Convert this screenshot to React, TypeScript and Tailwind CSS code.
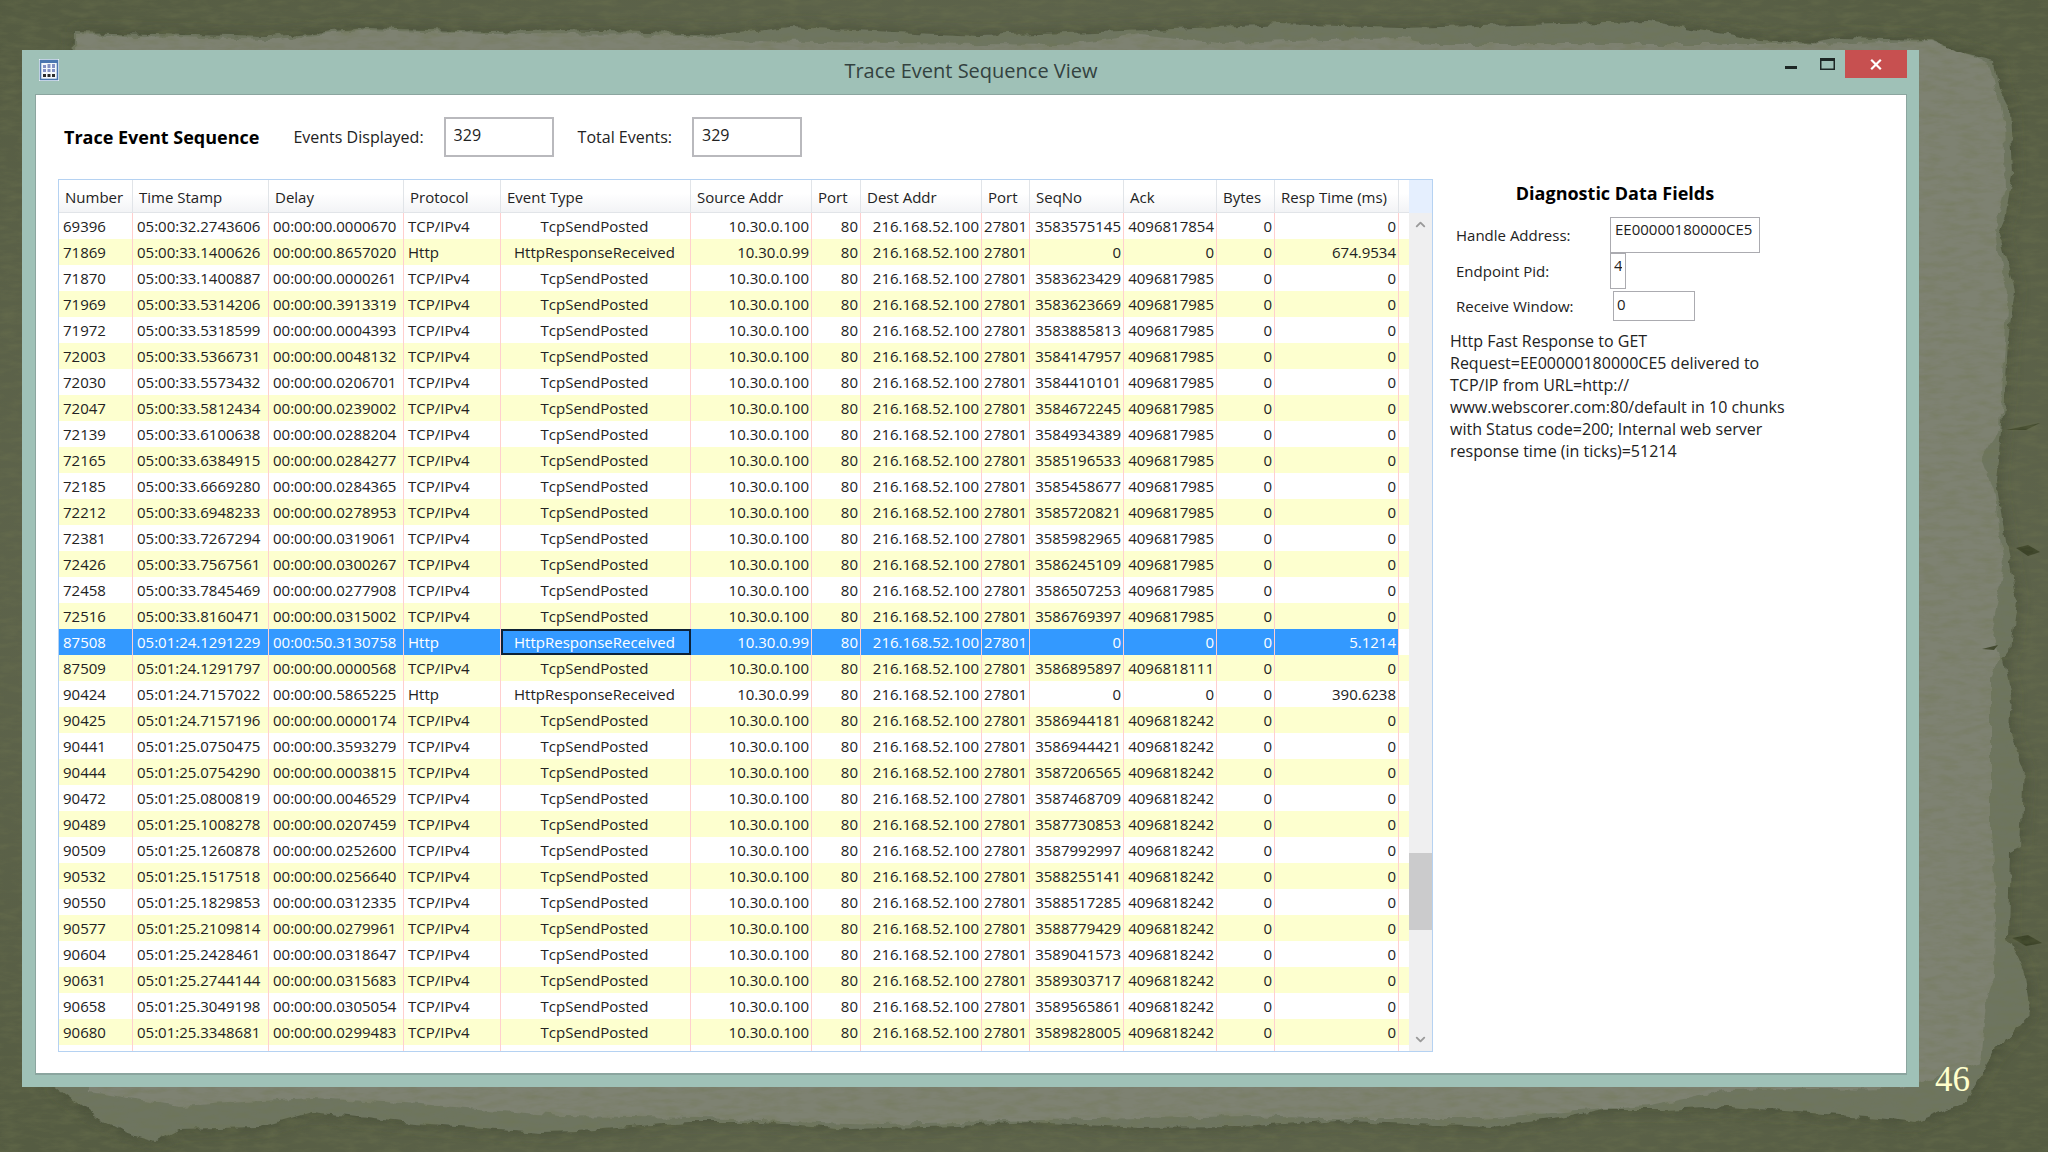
import clsx from "clsx";
import { ChevronDown, ChevronUp } from "lucide-react";

type Event = {
  number: number;
  time: string;
  delay: string;
  seqNo: string;
  ack: string;
  respTime?: string;
};

const tcp = (
  number: number,
  time: string,
  delay: string,
  seqNo: string,
  ack: string
): Event => ({ number, time, delay, seqNo, ack });

const http = (
  number: number,
  time: string,
  delay: string,
  respTime: string
): Event => ({ number, time, delay, seqNo: "0", ack: "0", respTime });

const SELECTED = 87508;

const events: Event[] = [
  tcp(69396, "05:00:32.2743606", "00:00:00.0000670", "3583575145", "4096817854"),
  http(71869, "05:00:33.1400626", "00:00:00.8657020", "674.9534"),
  tcp(71870, "05:00:33.1400887", "00:00:00.0000261", "3583623429", "4096817985"),
  tcp(71969, "05:00:33.5314206", "00:00:00.3913319", "3583623669", "4096817985"),
  tcp(71972, "05:00:33.5318599", "00:00:00.0004393", "3583885813", "4096817985"),
  tcp(72003, "05:00:33.5366731", "00:00:00.0048132", "3584147957", "4096817985"),
  tcp(72030, "05:00:33.5573432", "00:00:00.0206701", "3584410101", "4096817985"),
  tcp(72047, "05:00:33.5812434", "00:00:00.0239002", "3584672245", "4096817985"),
  tcp(72139, "05:00:33.6100638", "00:00:00.0288204", "3584934389", "4096817985"),
  tcp(72165, "05:00:33.6384915", "00:00:00.0284277", "3585196533", "4096817985"),
  tcp(72185, "05:00:33.6669280", "00:00:00.0284365", "3585458677", "4096817985"),
  tcp(72212, "05:00:33.6948233", "00:00:00.0278953", "3585720821", "4096817985"),
  tcp(72381, "05:00:33.7267294", "00:00:00.0319061", "3585982965", "4096817985"),
  tcp(72426, "05:00:33.7567561", "00:00:00.0300267", "3586245109", "4096817985"),
  tcp(72458, "05:00:33.7845469", "00:00:00.0277908", "3586507253", "4096817985"),
  tcp(72516, "05:00:33.8160471", "00:00:00.0315002", "3586769397", "4096817985"),
  http(87508, "05:01:24.1291229", "00:00:50.3130758", "5.1214"),
  tcp(87509, "05:01:24.1291797", "00:00:00.0000568", "3586895897", "4096818111"),
  http(90424, "05:01:24.7157022", "00:00:00.5865225", "390.6238"),
  tcp(90425, "05:01:24.7157196", "00:00:00.0000174", "3586944181", "4096818242"),
  tcp(90441, "05:01:25.0750475", "00:00:00.3593279", "3586944421", "4096818242"),
  tcp(90444, "05:01:25.0754290", "00:00:00.0003815", "3587206565", "4096818242"),
  tcp(90472, "05:01:25.0800819", "00:00:00.0046529", "3587468709", "4096818242"),
  tcp(90489, "05:01:25.1008278", "00:00:00.0207459", "3587730853", "4096818242"),
  tcp(90509, "05:01:25.1260878", "00:00:00.0252600", "3587992997", "4096818242"),
  tcp(90532, "05:01:25.1517518", "00:00:00.0256640", "3588255141", "4096818242"),
  tcp(90550, "05:01:25.1829853", "00:00:00.0312335", "3588517285", "4096818242"),
  tcp(90577, "05:01:25.2109814", "00:00:00.0279961", "3588779429", "4096818242"),
  tcp(90604, "05:01:25.2428461", "00:00:00.0318647", "3589041573", "4096818242"),
  tcp(90631, "05:01:25.2744144", "00:00:00.0315683", "3589303717", "4096818242"),
  tcp(90658, "05:01:25.3049198", "00:00:00.0305054", "3589565861", "4096818242"),
  tcp(90680, "05:01:25.3348681", "00:00:00.0299483", "3589828005", "4096818242"),
];

const columns = [
  { title: "Number", width: "w-[74px]", align: "pl-1 text-left" },
  { title: "Time Stamp", width: "w-[136px]", align: "pl-1 text-left" },
  { title: "Delay", width: "w-[135px]", align: "pl-1 text-left" },
  { title: "Protocol", width: "w-[97px]", align: "pl-1 text-left" },
  { title: "Event Type", width: "w-[190px]", align: "pr-[2px] text-center" },
  { title: "Source Addr", width: "w-[121px]", align: "pr-[2px] text-right" },
  { title: "Port", width: "w-[49px]", align: "pr-[2px] text-right" },
  { title: "Dest Addr", width: "w-[121px]", align: "pr-[2px] text-right" },
  { title: "Port", width: "w-[48px]", align: "pr-[2px] text-right" },
  { title: "SeqNo", width: "w-[94px]", align: "pr-[2px] text-right" },
  { title: "Ack", width: "w-[93px]", align: "pr-[2px] text-right" },
  { title: "Bytes", width: "w-[58px]", align: "pr-[2px] text-right" },
  { title: "Resp Time (ms)", width: "w-[124px]", align: "pr-[2px] text-right" },
];

const EVENT_TYPE = 4;

function cells(e: Event) {
  const isHttp = e.respTime !== undefined;
  return [
    e.number,
    e.time,
    e.delay,
    isHttp ? "Http" : "TCP/IPv4",
    isHttp ? "HttpResponseReceived" : "TcpSendPosted",
    isHttp ? "10.30.0.99" : "10.30.0.100",
    "80",
    "216.168.52.100",
    "27801",
    e.seqNo,
    e.ack,
    "0",
    e.respTime ?? "0",
  ];
}

// torn sheet of paper behind the window
const sheet =
  "M74 32 268 37 366 28 490 32 560 30 730 34 790 27 980 36 1150 30 1280 24 1400 28 1648 22 1760 40 1813 43 1840 38 1929 40 1960 52 1995 60 2000 90 2010 110 2013 173 2006 215 1999 232 2015 290 2008 340 2005 400 2000 440 1996 482 2008 553 2017 601 2011 650 2003 659 2011 697 2009 731 2024 769 2020 846 2010 851 2008 937 2025 976 2030 1014 1995 1052 1965 1102 1915 1122 1880 1118 1729 1107 1662 1110 1605 1110 1560 1118 1491 1127 1386 1123 1340 1120 1240 1127 1140 1128 1030 1122 960 1126 850 1129 760 1122 690 1122 580 1131 540 1132 402 1122 312 1112 259 1127 179 1129 156 1141 125 1132 89 1112 54 1086Z";

function Backdrop() {
  return (
    <svg
      className="absolute inset-0 -z-10 size-full"
      viewBox="0 0 2048 1152"
      preserveAspectRatio="none"
      aria-hidden="true"
    >
      <defs>
        <filter id="grain" x="0" y="0" width="100%" height="100%">
          <feTurbulence type="fractalNoise" baseFrequency="0.05 0.16" numOctaves="4" seed="11" />
          <feColorMatrix values="0 0 0 0 0.16  0 0 0 0 0.18  0 0 0 0 0.08  0 1.5 0 0 -0.6" />
        </filter>
        <filter id="torn" x="-5%" y="-5%" width="110%" height="110%">
          <feTurbulence type="fractalNoise" baseFrequency="0.07" numOctaves="3" seed="3" />
          <feDisplacementMap in="SourceGraphic" scale="9" xChannelSelector="R" yChannelSelector="G" />
        </filter>
        <filter id="soft" x="-10%" y="-10%" width="120%" height="120%">
          <feGaussianBlur stdDeviation="8" />
        </filter>
        <radialGradient id="base" cx="50%" cy="50%" r="72%">
          <stop offset="60%" stopColor="#5f654d" />
          <stop offset="100%" stopColor="#545b41" />
        </radialGradient>
      </defs>
      <rect width="2048" height="1152" fill="url(#base)" />
      <path d={sheet} fill="#3f4631" opacity="0.7" filter="url(#soft)" />
      <path d={sheet} fill="#6e7560" filter="url(#torn)" />
      <path
        d="M76 34 268 40 366 30 490 34 700 35 735 41 1060 45 1140 34 1220 43 1400 38 1430 44 1813 44 1929 41 1990 62 2003 120 2005 190 1994 232 2008 290 2000 429 1981 457 1996 496 2003 568 1991 630 2001 659 1991 678 1991 832 1996 908 1995 976 1986 1004 1980 1062 1900 1088 1729 1090 1650 1106 1480 1118 1310 1118 1250 1116 1040 1120 880 1124 700 1118 560 1116 420 1104 312 1098 180 1106 90 1092Z"
        fill="#7e8272"
        filter="url(#torn)"
      />
      <g fill="#353c20" opacity="0.8">
        <path d="M2016 548 2028 545 2040 552 2028 556Z" />
        <path d="M2012 938 2028 935 2042 943 2026 946Z" />
        <path d="M2006 430 2040 423 2026 430Z" />
        <path d="M1982 649 1998 645 1994 650Z" />
      </g>
      <rect width="2048" height="1152" filter="url(#grain)" opacity="0.5" />
    </svg>
  );
}

function AppIcon() {
  return (
    <svg width="20" height="22" viewBox="0 0 20 22" aria-hidden="true">
      <rect width="20" height="22" fill="#f4f8fb" />
      <rect x="1.5" y="1.5" width="17" height="19" fill="#f4f8fb" stroke="#4a76b0" strokeWidth="1.6" />
      <rect x="1" y="1" width="18" height="3" fill="#4a76b0" />
      <g fill="#8391c4">
        <rect x="4" y="6" width="3" height="3" />
        <rect x="8.5" y="5" width="3" height="4" />
        <rect x="13" y="5" width="3" height="4" />
        <rect x="4" y="10" width="3" height="3" />
        <rect x="8.5" y="10" width="3" height="3" />
        <rect x="13" y="10" width="3" height="3" />
      </g>
      <g fill="#2b2b2b">
        <rect x="4" y="15" width="3" height="3" />
        <rect x="8.5" y="15" width="3" height="3" />
        <rect x="13" y="15" width="3" height="3" />
      </g>
    </svg>
  );
}

function TitleBar() {
  return (
    <header className="grid h-11 grid-cols-[1fr_auto_1fr]">
      <div className="pt-[9px] pl-1">
        <AppIcon />
      </div>
      <h1 className="pt-[9px] text-[20px] leading-6 text-[#33423f]">
        Trace Event Sequence View
      </h1>
      <div className="flex items-start justify-end">
        <button type="button" aria-label="Minimize" className="flex h-7 w-9 items-center justify-center">
          <svg width="12" height="12" viewBox="0 0 12 12">
            <rect y="8" width="12" height="3" fill="#1d2725" />
          </svg>
        </button>
        <button type="button" aria-label="Maximize" className="flex h-7 w-9 items-center justify-center">
          <svg width="15" height="12" viewBox="0 0 15 12">
            <rect x="0.75" y="0.75" width="13.5" height="10.5" fill="none" stroke="#1d2725" strokeWidth="1.5" />
            <rect width="15" height="3" fill="#1d2725" />
          </svg>
        </button>
        <button
          type="button"
          aria-label="Close"
          className="flex h-7 w-[62px] items-center justify-center bg-[#c75050]"
        >
          <svg width="12" height="11" viewBox="0 0 12 11">
            <path d="M1.2 0.8 10.8 10.2M10.8 0.8 1.2 10.2" stroke="#fff" strokeWidth="2.2" />
          </svg>
        </button>
      </div>
    </header>
  );
}

function Summary() {
  return (
    <div className="flex h-[84px] items-center text-base">
      <h2 className="ml-[6px] text-lg font-bold text-black">Trace Event Sequence</h2>
      <label htmlFor="displayed" className="ml-[34px]">
        Events Displayed:
      </label>
      <input
        id="displayed"
        defaultValue="329"
        className="ml-5 h-10 w-[110px] border-2 border-[#b9b9bd] px-2 pb-1"
      />
      <label htmlFor="total" className="ml-6">
        Total Events:
      </label>
      <input
        id="total"
        defaultValue="329"
        className="ml-5 h-10 w-[110px] border-2 border-[#b9b9bd] px-2 pb-1"
      />
    </div>
  );
}

function EventTable() {
  return (
    <table className="min-w-0 flex-1 table-fixed border-separate border-spacing-0">
      <thead>
        <tr className="h-[33px] bg-linear-to-b from-white from-40% to-[#f2f3f5]">
          {columns.map((col, i) => (
            <th
              key={i}
              scope="col"
              className={clsx(
                col.width,
                "border-r border-b border-[#e1e4e8] pt-px pl-[6px] text-left font-normal whitespace-nowrap"
              )}
            >
              {col.title}
            </th>
          ))}
          <td className="border-b border-[#e1e4e8]" />
        </tr>
      </thead>
      <tbody>
        {events.map((event, row) => {
          const selected = event.number === SELECTED;
          return (
            <tr
              key={event.number}
              className={clsx("h-[26px]", row % 2 === 1 && "bg-[#fdffcf]")}
            >
              {cells(event).map((value, i) => (
                <td
                  key={i}
                  className={clsx(
                    columns[i].align,
                    "border-r border-[#ffcfcf] whitespace-nowrap",
                    selected && "bg-[#3399ff] text-white",
                    selected &&
                      i === EVENT_TYPE &&
                      "outline-2 -outline-offset-2 outline-[#0d2238]"
                  )}
                >
                  {value}
                </td>
              ))}
              <td />
            </tr>
          );
        })}
        <tr className="h-[6px]">
          {columns.map((_, i) => (
            <td key={i} className="border-r border-[#ffcfcf]" />
          ))}
          <td />
        </tr>
      </tbody>
    </table>
  );
}

function ScrollBar() {
  return (
    <div className="flex w-[23px] flex-col bg-[#efeff0] text-[#9a9a9a]">
      <div className="h-[33px] bg-[#e5effe]" />
      <button type="button" aria-label="Scroll up" className="flex h-[23px] items-center justify-center">
        <ChevronUp size={15} strokeWidth={3} />
      </button>
      <div className="grow-[618]" />
      <div className="h-[77px] bg-[#cbcbcc]" />
      <div className="grow-[98]" />
      <button type="button" aria-label="Scroll down" className="flex h-[23px] items-center justify-center">
        <ChevronDown size={15} strokeWidth={3} />
      </button>
    </div>
  );
}

function Diagnostics() {
  return (
    <aside className="w-[473px] shrink-0 pl-[17px]">
      <h2 className="w-[330px] pt-[2px] text-center text-lg leading-6 font-bold text-black">
        Diagnostic Data Fields
      </h2>
      <div className="mt-3 flex h-9 items-center pl-[6px]">
        <label htmlFor="handle" className="w-[154px]">
          Handle Address:
        </label>
        <input
          id="handle"
          defaultValue="EE00000180000CE5"
          className="h-9 w-[150px] border border-[#ababb0] px-1 pb-3"
        />
      </div>
      <div className="flex h-9 items-center pl-[6px]">
        <label htmlFor="pid" className="w-[154px]">
          Endpoint Pid:
        </label>
        <input
          id="pid"
          defaultValue="4"
          className="h-9 w-4 border border-[#ababb0] px-[3px] pb-3"
        />
      </div>
      <div className="mt-[2px] flex h-[30px] items-center pl-[6px]">
        <label htmlFor="window" className="w-[157px]">
          Receive Window:
        </label>
        <input
          id="window"
          defaultValue="0"
          className="h-[30px] w-[82px] border border-[#ababb0] px-[3px] pb-1"
        />
      </div>
      <p className="mt-[9px] text-base leading-[22px] whitespace-nowrap">
        Http Fast Response to GET
        <br />
        Request=EE00000180000CE5 delivered to
        <br />
        TCP/IP from URL=http://
        <br />
        www.webscorer.com:80/default in 10 chunks
        <br />
        with Status code=200; Internal web server
        <br />
        response time (in ticks)=51214
      </p>
    </aside>
  );
}

export default function App() {
  return (
    <div className="relative isolate flex min-h-screen items-start gap-4 overflow-hidden pt-[50px] pl-[22px] font-['Open_Sans','Noto_Sans',sans-serif] text-[15px] leading-5 text-[#222]">
      <Backdrop />
      <section className="min-w-0 flex-1 bg-[#9fc1b7] pr-3 pb-3 pl-[13px]">
        <TitleBar />
        <main className="border border-b-2 border-[#8ba59f] bg-white pb-[21px] pl-[22px]">
          <Summary />
          <div className="flex">
            <div className="flex min-w-0 flex-1 border border-[#b5d2f2]">
              <EventTable />
              <ScrollBar />
            </div>
            <Diagnostics />
          </div>
        </main>
      </section>
      <span className="w-[113px] self-end pb-[52px] font-['Liberation_Serif',serif] text-[35px] leading-10 text-[#ffffcc]">
        46
      </span>
    </div>
  );
}
